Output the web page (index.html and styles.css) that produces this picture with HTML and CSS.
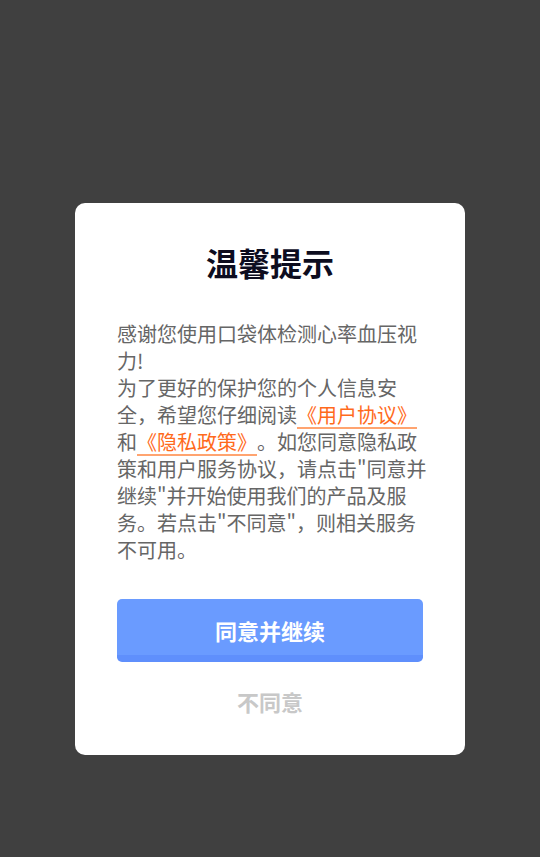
FILE: index.html
```html
<!DOCTYPE html>
<html lang="zh-CN">
<head>
    <meta charset="UTF-8">
    <meta name="viewport" content="width=device-width, initial-scale=1.0">
    <title>温馨提示</title>
    <link rel="stylesheet" href="styles.css">
</head>
<body>
    <div class="mask">
        <div class="dialog box-center">
            <h3 class="dialog-title">温馨提示</h3>
            <div class="dialog-text">
                <p>感谢您使用口袋体检测心率血压视力!</p>
                <p>为了更好的保护您的个人信息安全，希望您仔细阅读<a href="#">《用户协议》</a>和<a href="#">《隐私政策》</a>。如您同意隐私政策和用户服务协议，请点击"同意并继续"并开始使用我们的产品及服务。若点击"不同意"，则相关服务不可用。</p>
            </div>
            <button class="btn-agree">同意并继续</button>
            <button class="btn-refuse">不同意</button>
        </div>
    </div>
</body>
</html>
```

FILE: styles.css
```css
*{box-sizing: border-box;}
html, body{
    margin: 0;
    padding: 0;
}
body{
    background: #404040;
    font-family: "Noto Sans CJK SC", "Noto Sans", sans-serif;
}
.box-center{
    margin-left: auto;
    margin-right: auto;
}
.mask{
    height: 857px;
    padding-top: 203px;
}
.dialog{
    width: 390px;
    padding: 40px 42px 34px;
    background: #fff;
    border-radius: 10px;
}
.dialog-title{
    margin: 0;
    font-size: 32px;
    line-height: 38px;
    font-weight: bold;
    color: #0d0d1f;
    text-align: center;
}
.dialog-text{
    margin-top: 39px;
    margin-right: -6px;
    font-size: 20px;
    line-height: 27px;
    color: #666;
    text-spacing-trim: space-all;
}
.dialog-text p{
    margin: 0;
}
.dialog-text a{
    color: #ff6a1c;
    text-decoration: underline;
    text-decoration-color: #ffa470;
    text-underline-offset: 4px;
}
.dialog button{
    display: block;
    width: 100%;
    border: none;
    font-family: inherit;
    font-weight: bold;
    font-size: 22px;
    cursor: pointer;
}
.btn-agree{
    margin-top: 36px;
    padding: 6px 0 0;
    line-height: 50px;
    background: #6a9bff;
    border-bottom: 7px solid #5f8ffc !important;
    border-radius: 5px;
    color: #fff;
}
.btn-refuse{
    margin-top: 19px;
    padding: 0;
    line-height: 40px;
    background: none;
    color: #c8c8c8;
}
```
